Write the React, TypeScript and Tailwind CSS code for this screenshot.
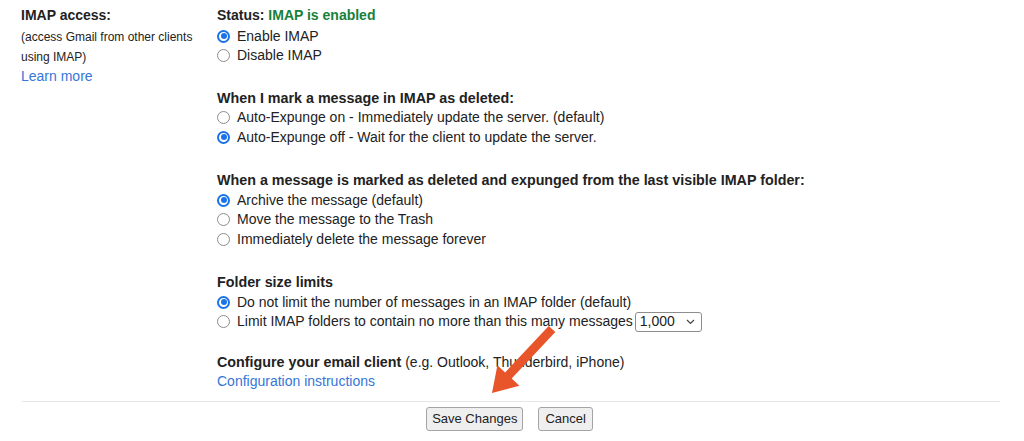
import React from 'react';

const Radio = ({ checked }: { checked?: boolean }) =>
  checked ? (
    <span className="w-[13px] h-[13px] rounded-full border-2 border-[#1a73e8] flex items-center justify-center shrink-0">
      <span className="w-[6px] h-[6px] rounded-full bg-[#1a73e8]" />
    </span>
  ) : (
    <span className="w-[13px] h-[13px] rounded-full border border-[#8d8d8d] bg-white shrink-0" />
  );

const Option = ({ checked, children }: { checked?: boolean; children: React.ReactNode }) => (
  <div className="h-[19.5px] flex items-center gap-[7px]">
    <Radio checked={checked} />
    <span className="whitespace-nowrap">{children}</span>
  </div>
);

const Heading = ({ children }: { children: React.ReactNode }) => (
  <div className="h-[19.5px] flex items-center font-bold text-[14.3px] whitespace-nowrap">{children}</div>
);

export default function App() {
  return (
    <div className="relative w-[1024px] h-[441px] bg-white overflow-hidden text-[14px] text-[#222] font-['Liberation_Sans',Arial,sans-serif]">
      <div className="flex pl-[21px] pt-[6px]">
        {/* Label column */}
        <div className="w-[196px] shrink-0">
          <div className="h-[19.5px] flex items-center font-bold">IMAP access:</div>
          <div className="text-[12px] leading-[20px] mt-px">
            <div>(access Gmail from other clients</div>
            <div>using IMAP)</div>
          </div>
          <div className="h-[19.5px] flex items-center text-[#3576d8]">Learn more</div>
        </div>

        {/* Settings column */}
        <div>
          <div className="h-[19.5px] flex items-center font-bold">
            Status:&nbsp;<span className="text-[#188038]">IMAP is enabled</span>
          </div>
          <div className="mt-px">
            <Option checked>Enable IMAP</Option>
            <Option>Disable IMAP</Option>
          </div>

          <div className="mt-[23px]">
            <Heading>When I mark a message in IMAP as deleted:</Heading>
            <Option>Auto-Expunge on - Immediately update the server. (default)</Option>
            <Option checked>Auto-Expunge off - Wait for the client to update the server.</Option>
          </div>

          <div className="mt-[24px]">
            <Heading>When a message is marked as deleted and expunged from the last visible IMAP folder:</Heading>
            <Option checked>Archive the message (default)</Option>
            <Option>Move the message to the Trash</Option>
            <Option>Immediately delete the message forever</Option>
          </div>

          <div className="mt-[24px]">
            <Heading>Folder size limits</Heading>
            <Option checked>Do not limit the number of messages in an IMAP folder (default)</Option>
            <div className="h-[19.5px] flex items-center gap-[7px]">
              <Radio />
              <span className="whitespace-nowrap">Limit IMAP folders to contain no more than this many messages</span>
              <div className="ml-[-5px] w-[67px] h-[20px] border border-[#8d8d8d] rounded-[3px] flex items-center justify-between pl-[4px] pr-[6px]">
                <span>1,000</span>
                <svg width="9" height="6" viewBox="0 0 9 6" fill="none">
                  <path d="M1 1l3.5 3.5L8 1" stroke="#444" strokeWidth="1.2" />
                </svg>
              </div>
            </div>
          </div>

          <div className="mt-[21px]">
            <div className="h-[19.5px] flex items-center whitespace-nowrap">
              <span className="font-bold text-[14.3px]">Configure your email client</span>&nbsp;(e.g. Outlook, Thunderbird, iPhone)
            </div>
            <div className="h-[19.5px] flex items-center text-[#3576d8]">Configuration instructions</div>
          </div>
        </div>
      </div>

      <div className="mx-[22px] w-[978px] mt-[9px] border-t border-[#e6e6e6]" />

      <div className="flex justify-center gap-[15px] pt-[5px] pr-[5px]">
        <button className="h-[24px] px-[5px] bg-[#efefef] border border-[#a4a4a4] rounded-[3px] text-[13px] text-[#222]">
          Save Changes
        </button>
        <button className="h-[24px] px-[6px] bg-[#efefef] border border-[#a4a4a4] rounded-[3px] text-[13px] text-[#222]">
          Cancel
        </button>
      </div>

      {/* annotation arrow */}
      <svg className="absolute left-0 top-0 pointer-events-none" width="1024" height="441">
        <polygon
          points="548.7,325.9 555.3,332.1 511.7,378.6 519.4,385.8 492,393 497.4,365.2 505.1,372.4"
          fill="#e8552b"
        />
      </svg>
    </div>
  );
}
